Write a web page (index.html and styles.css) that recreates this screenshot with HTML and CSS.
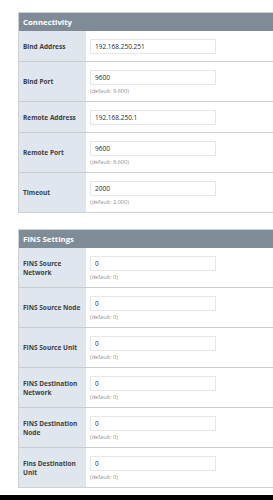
FILE: index.html
```html
<!DOCTYPE html>
<html>
<head>
<meta charset="utf-8">
<link rel="stylesheet" href="styles.css">
</head>
<body>
<div class="page">
  <div class="section">
    <div class="section-head">Connectivity</div>
    <div class="row">
      <div class="label">Bind Address</div>
      <div class="value"><div class="input">192.168.250.251</div></div>
    </div>
    <div class="row">
      <div class="label">Bind Port</div>
      <div class="value"><div class="input">9600</div><div class="hint">(default: 9.600)</div></div>
    </div>
    <div class="row">
      <div class="label">Remote Address</div>
      <div class="value"><div class="input">192.168.250.1</div></div>
    </div>
    <div class="row">
      <div class="label">Remote Port</div>
      <div class="value"><div class="input">9600</div><div class="hint">(default: 9.600)</div></div>
    </div>
    <div class="row">
      <div class="label">Timeout</div>
      <div class="value"><div class="input">2000</div><div class="hint">(default: 2.000)</div></div>
    </div>
  </div>

  <div class="section second">
    <div class="section-head">FINS Settings</div>
    <div class="row">
      <div class="label">FINS Source Network</div>
      <div class="value"><div class="input">0</div><div class="hint">(default: 0)</div></div>
    </div>
    <div class="row">
      <div class="label">FINS Source Node</div>
      <div class="value"><div class="input">0</div><div class="hint">(default: 0)</div></div>
    </div>
    <div class="row">
      <div class="label">FINS Source Unit</div>
      <div class="value"><div class="input">0</div><div class="hint">(default: 0)</div></div>
    </div>
    <div class="row">
      <div class="label">FINS Destination Network</div>
      <div class="value"><div class="input">0</div><div class="hint">(default: 0)</div></div>
    </div>
    <div class="row">
      <div class="label">FINS Destination Node</div>
      <div class="value"><div class="input">0</div><div class="hint">(default: 0)</div></div>
    </div>
    <div class="row">
      <div class="label">Fins Destination Unit</div>
      <div class="value"><div class="input">0</div><div class="hint">(default: 0)</div></div>
    </div>
  </div>
</div>
<div class="bottom-bar"></div>
</body>
</html>
```

FILE: styles.css
```css
html, body {
  margin: 0;
  padding: 0;
  background: #ffffff;
  height: 500px;
  overflow: hidden;
  font-family: "Open Sans", "Liberation Sans", sans-serif;
}

.page {
  box-sizing: border-box;
  padding: 12px 0 0 18px;
  height: 495px;
  overflow: hidden;
}

.section {
  border: 1px solid #cdd2d7;
  border-right: none;
  background: #ffffff;
}

.second {
  margin-top: 16px;
}

.section-head {
  background: #7f8c98;
  color: #ffffff;
  font-weight: 700;
  font-size: 7.8px;
  height: 18px;
  line-height: 18px;
  padding-left: 4px;
}

.row {
  display: grid;
  grid-template-columns: 67px 1fr;
  border-bottom: 1px solid #c8cdd2;
}

.row:last-child {
  border-bottom: none;
}

.label {
  background: #dfe6ed;
  color: #3a3f44;
  font-weight: 700;
  font-size: 6.5px;
  line-height: 9px;
  padding: 0 3px 0 4px;
  display: flex;
  align-items: center;
}

.value {
  padding: 8px 0 7px 4px;
  line-height: 0;
}

.input {
  width: 120px;
  height: 13px;
  border: 1px solid #e4e6e8;
  color: #2a2a2a;
  font-size: 6.5px;
  line-height: 13px;
  padding-left: 4px;
  box-sizing: content-box;
}

.hint {
  color: #8e8e8e;
  font-size: 5.6px;
  line-height: 10px;
  height: 10px;
  margin-top: 1px;
  margin-bottom: -2px;
}

.bottom-bar {
  background: #000000;
  height: 5px;
}
```
